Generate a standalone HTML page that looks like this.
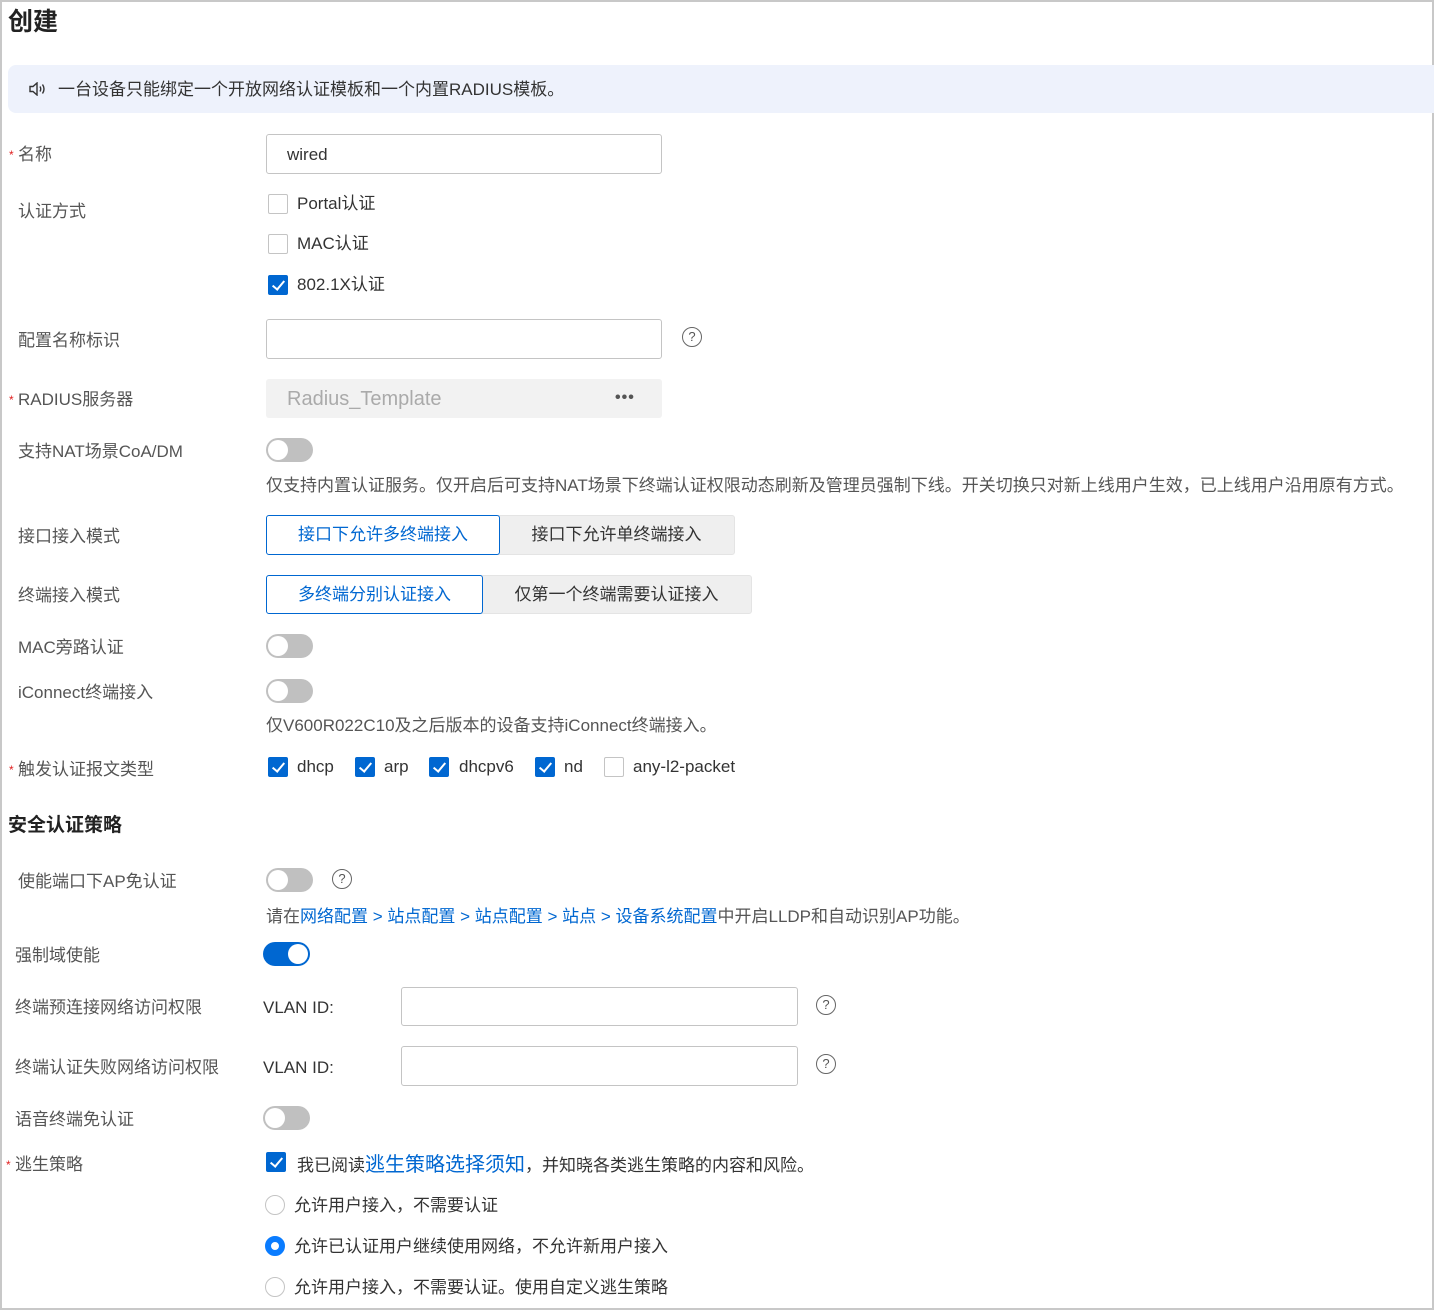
<!DOCTYPE html>
<html><head><meta charset="utf-8"><style>
*{box-sizing:border-box;margin:0;padding:0}
body{width:1434px;height:1310px;position:relative;background:#fff;font-family:"Liberation Sans","Noto Sans CJK SC",sans-serif;font-size:17px;color:#333;overflow:hidden}
.frame{position:absolute;left:0;top:0;width:1434px;height:1310px;border:2px solid #c8c8c8}
.a{position:absolute;white-space:nowrap;line-height:20px}
.lbl{color:#555}
.req{color:#e02020;font-size:12px;position:absolute}
.inp{position:absolute;border:1px solid #c4c4c4;border-radius:3px;background:#fff}
.cb{position:absolute;width:20px;height:20px;border:1px solid #c4c4c4;border-radius:2px;background:#fff}
.cb.on{background:#0067d1;border-color:#0067d1}
.cb.on::after{content:"";position:absolute;left:6px;top:2px;width:5px;height:10px;border:solid #fff;border-width:0 2px 2px 0;transform:rotate(40deg)}
.tg{position:absolute;width:47px;height:24px;border-radius:12px;background:#c0c0c0}
.tg::after{content:"";position:absolute;left:2px;top:2px;width:20px;height:20px;border-radius:50%;background:#fff}
.tg.on{background:#0067d1}
.tg.on::after{left:25px}
.help{position:absolute;width:20px;height:20px;border:1.5px solid #666;border-radius:50%;font-size:13px;line-height:17px;text-align:center;color:#555}
.seg{position:absolute;height:40px;line-height:38px;text-align:center;font-size:17px}
.seg.on{border:1px solid #0067d1;border-radius:3px;color:#0067d1;background:#fff;z-index:2}
.seg.off{background:#efefef;border:1px solid #e4e4e4;border-radius:0 3px 3px 0;color:#333}
.rd{position:absolute;width:20px;height:20px;border:1px solid #c4c4c4;border-radius:50%;background:#fff}
.rd.on{border:6px solid #0a7cff}
.blue{color:#0067d1}
.desc{color:#555}
</style></head><body>
<div class="frame"></div>
<div class="a" style="left:8px;top:8px;font-size:25px;font-weight:bold;line-height:28px;color:#222">创建</div>
<div style="position:absolute;left:8px;top:65px;width:1426px;height:48px;background:#eef2fc;border-radius:8px 0 0 8px"></div>
<svg style="position:absolute;left:29px;top:82px" width="18" height="14" viewBox="0 0 18 14"><path d="M1 4.5h3l4-3.5v12l-4-3.5H1z" fill="none" stroke="#333" stroke-width="1.4"/><path d="M11 4.5q1.5 2.5 0 5M13.5 2.5q3 4.5 0 9" fill="none" stroke="#333" stroke-width="1.4"/></svg>
<div class="a" style="left:58px;top:80px">一台设备只能绑定一个开放网络认证模板和一个内置RADIUS模板。</div>

<span class="req" style="left:9px;top:148px">*</span><div class="a lbl" style="left:18px;top:145px">名称</div>
<div class="inp" style="left:266px;top:134px;width:396px;height:40px"></div>
<div class="a" style="left:287px;top:145px">wired</div>

<div class="a lbl" style="left:18px;top:202px">认证方式</div>
<div class="cb" style="left:268px;top:194px"></div><div class="a" style="left:297px;top:194px">Portal认证</div>
<div class="cb" style="left:268px;top:234px"></div><div class="a" style="left:297px;top:234px">MAC认证</div>
<div class="cb on" style="left:268px;top:275px"></div><div class="a" style="left:297px;top:275px">802.1X认证</div>

<div class="a lbl" style="left:18px;top:331px">配置名称标识</div>
<div class="inp" style="left:266px;top:319px;width:396px;height:40px"></div>
<div class="help" style="left:682px;top:327px">?</div>

<span class="req" style="left:9px;top:393px">*</span><div class="a lbl" style="left:18px;top:390px">RADIUS服务器</div>
<div style="position:absolute;left:266px;top:379px;width:396px;height:39px;background:#f2f2f2;border-radius:3px"></div>
<div class="a" style="left:287px;top:389px;font-size:20px;color:#aaa">Radius_Template</div>
<div class="a" style="left:615px;top:388px;font-size:16px;color:#555;letter-spacing:1px;font-weight:bold">•••</div>

<div class="a lbl" style="left:18px;top:442px">支持NAT场景CoA/DM</div>
<div class="tg" style="left:266px;top:438px"></div>
<div class="a desc" style="left:266px;top:476px">仅支持内置认证服务。仅开启后可支持NAT场景下终端认证权限动态刷新及管理员强制下线。开关切换只对新上线用户生效，已上线用户沿用原有方式。</div>

<div class="a lbl" style="left:18px;top:527px">接口接入模式</div>
<div class="seg off" style="left:498px;top:515px;width:237px">接口下允许单终端接入</div>
<div class="seg on" style="left:266px;top:515px;width:234px">接口下允许多终端接入</div>

<div class="a lbl" style="left:18px;top:586px">终端接入模式</div>
<div class="seg off" style="left:481px;top:575px;width:271px;height:39px;line-height:37px">仅第一个终端需要认证接入</div>
<div class="seg on" style="left:266px;top:575px;width:217px;height:39px;line-height:37px">多终端分别认证接入</div>

<div class="a lbl" style="left:18px;top:638px">MAC旁路认证</div>
<div class="tg" style="left:266px;top:634px"></div>
<div class="a lbl" style="left:18px;top:683px">iConnect终端接入</div>
<div class="tg" style="left:266px;top:679px"></div>
<div class="a desc" style="left:266px;top:716px">仅V600R022C10及之后版本的设备支持iConnect终端接入。</div>

<span class="req" style="left:9px;top:763px">*</span><div class="a lbl" style="left:18px;top:760px">触发认证报文类型</div>
<div class="cb on" style="left:268px;top:757px"></div><div class="a" style="left:297px;top:757px">dhcp</div>
<div class="cb on" style="left:355px;top:757px"></div><div class="a" style="left:384px;top:757px">arp</div>
<div class="cb on" style="left:429px;top:757px"></div><div class="a" style="left:459px;top:757px">dhcpv6</div>
<div class="cb on" style="left:535px;top:757px"></div><div class="a" style="left:564px;top:757px">nd</div>
<div class="cb" style="left:604px;top:757px"></div><div class="a" style="left:633px;top:757px">any-l2-packet</div>

<div class="a" style="left:8px;top:816px;font-size:19px;font-weight:bold;color:#222">安全认证策略</div>

<div class="a lbl" style="left:18px;top:872px">使能端口下AP免认证</div>
<div class="tg" style="left:266px;top:868px"></div>
<div class="help" style="left:332px;top:869px">?</div>
<div class="a desc" style="left:266px;top:907px">请在<span class="blue">网络配置 &gt; 站点配置 &gt; 站点配置 &gt; 站点 &gt; 设备系统配置</span>中开启LLDP和自动识别AP功能。</div>

<div class="a lbl" style="left:15px;top:946px">强制域使能</div>
<div class="tg on" style="left:263px;top:942px"></div>

<div class="a lbl" style="left:15px;top:998px">终端预连接网络访问权限</div>
<div class="a" style="left:263px;top:998px">VLAN ID:</div>
<div class="inp" style="left:401px;top:987px;width:397px;height:39px"></div>
<div class="help" style="left:816px;top:995px">?</div>

<div class="a lbl" style="left:15px;top:1058px">终端认证失败网络访问权限</div>
<div class="a" style="left:263px;top:1058px">VLAN ID:</div>
<div class="inp" style="left:401px;top:1046px;width:397px;height:40px"></div>
<div class="help" style="left:816px;top:1054px">?</div>

<div class="a lbl" style="left:15px;top:1110px">语音终端免认证</div>
<div class="tg" style="left:263px;top:1106px"></div>

<span class="req" style="left:6px;top:1158px">*</span><div class="a lbl" style="left:15px;top:1155px">逃生策略</div>
<div class="cb on" style="left:266px;top:1152px"></div>
<div class="a" style="left:297px;top:1155px">我已阅读<span class="blue" style="font-size:20px">逃生策略选择须知</span>，并知晓各类逃生策略的内容和风险。</div>
<div class="rd" style="left:265px;top:1195px"></div><div class="a" style="left:294px;top:1196px">允许用户接入，不需要认证</div>
<div class="rd on" style="left:265px;top:1236px"></div><div class="a" style="left:294px;top:1237px">允许已认证用户继续使用网络，不允许新用户接入</div>
<div class="rd" style="left:265px;top:1277px"></div><div class="a" style="left:294px;top:1278px">允许用户接入，不需要认证。使用自定义逃生策略</div>
</body></html>
